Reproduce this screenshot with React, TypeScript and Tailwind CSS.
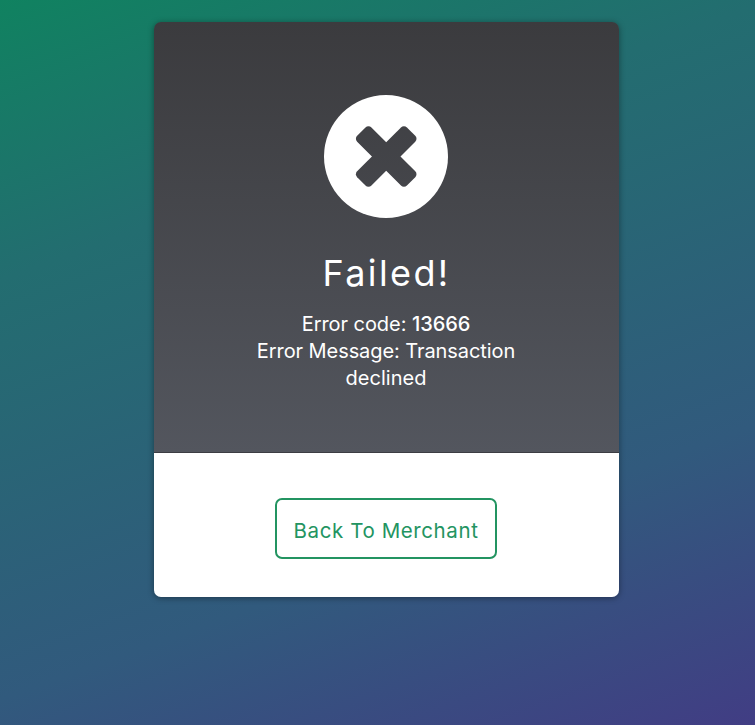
import React from "react";

function FailedIcon() {
  return (
    <svg className="-ml-px h-[123px] w-[124px]" viewBox="0 0 124 123" aria-hidden="true">
      <mask id="cross">
        <rect width="124" height="123" fill="white" />
        <g fill="black" transform="translate(62.2 61.5)">
          <rect x="-35.2" y="-10.1" width="70.4" height="20.2" rx="4.2" transform="rotate(45)" />
          <rect x="-35.2" y="-10.1" width="70.4" height="20.2" rx="4.2" transform="rotate(-45)" />
        </g>
      </mask>
      <ellipse cx="62" cy="61.5" rx="62" ry="61.5" fill="white" mask="url(#cross)" />
    </svg>
  );
}

export default function App() {
  return (
    <div className="h-[725px] w-full bg-[linear-gradient(160deg,#108260_0%,#236d70_28%,#315a7d_70%,#413d84_100%)] pt-[22px] font-['Inter','Liberation_Sans',sans-serif]">
      <main className="ml-[154px] flex h-[575px] w-[465px] flex-col rounded-[7px] shadow-[0_1px_6px_rgba(0,0,0,0.4)]">
        <section className="flex h-[431px] flex-col items-center rounded-t-[7px] border-b border-[#3c3d43] bg-linear-to-b from-[#3b3b3e] to-[#53565e] pt-[73px] text-white">
          <FailedIcon />
          <h1 className="mt-[30px] text-[36px] leading-[50px] font-normal tracking-[2.4px]">Failed!</h1>
          <div className="mt-[13px] flex flex-col items-center pr-px text-[20px] leading-[27px] font-normal whitespace-nowrap">
            <p className="tracking-[-0.06px]">Error code: <strong className="font-medium">13666</strong></p>
            <p className="tracking-[-0.08px]">Error Message: Transaction</p>
            <p className="tracking-[0.05px]">declined</p>
          </div>
        </section>
        <footer className="flex flex-1 justify-center rounded-b-[7px] bg-white pt-[45px] pr-px">
          <button className="h-[61px] w-[222px] rounded-[7px] border-2 border-[#239461] pt-[6px] text-[20.5px] tracking-[0.6px] whitespace-nowrap text-[#239461]">
            Back To Merchant
          </button>
        </footer>
      </main>
    </div>
  );
}
